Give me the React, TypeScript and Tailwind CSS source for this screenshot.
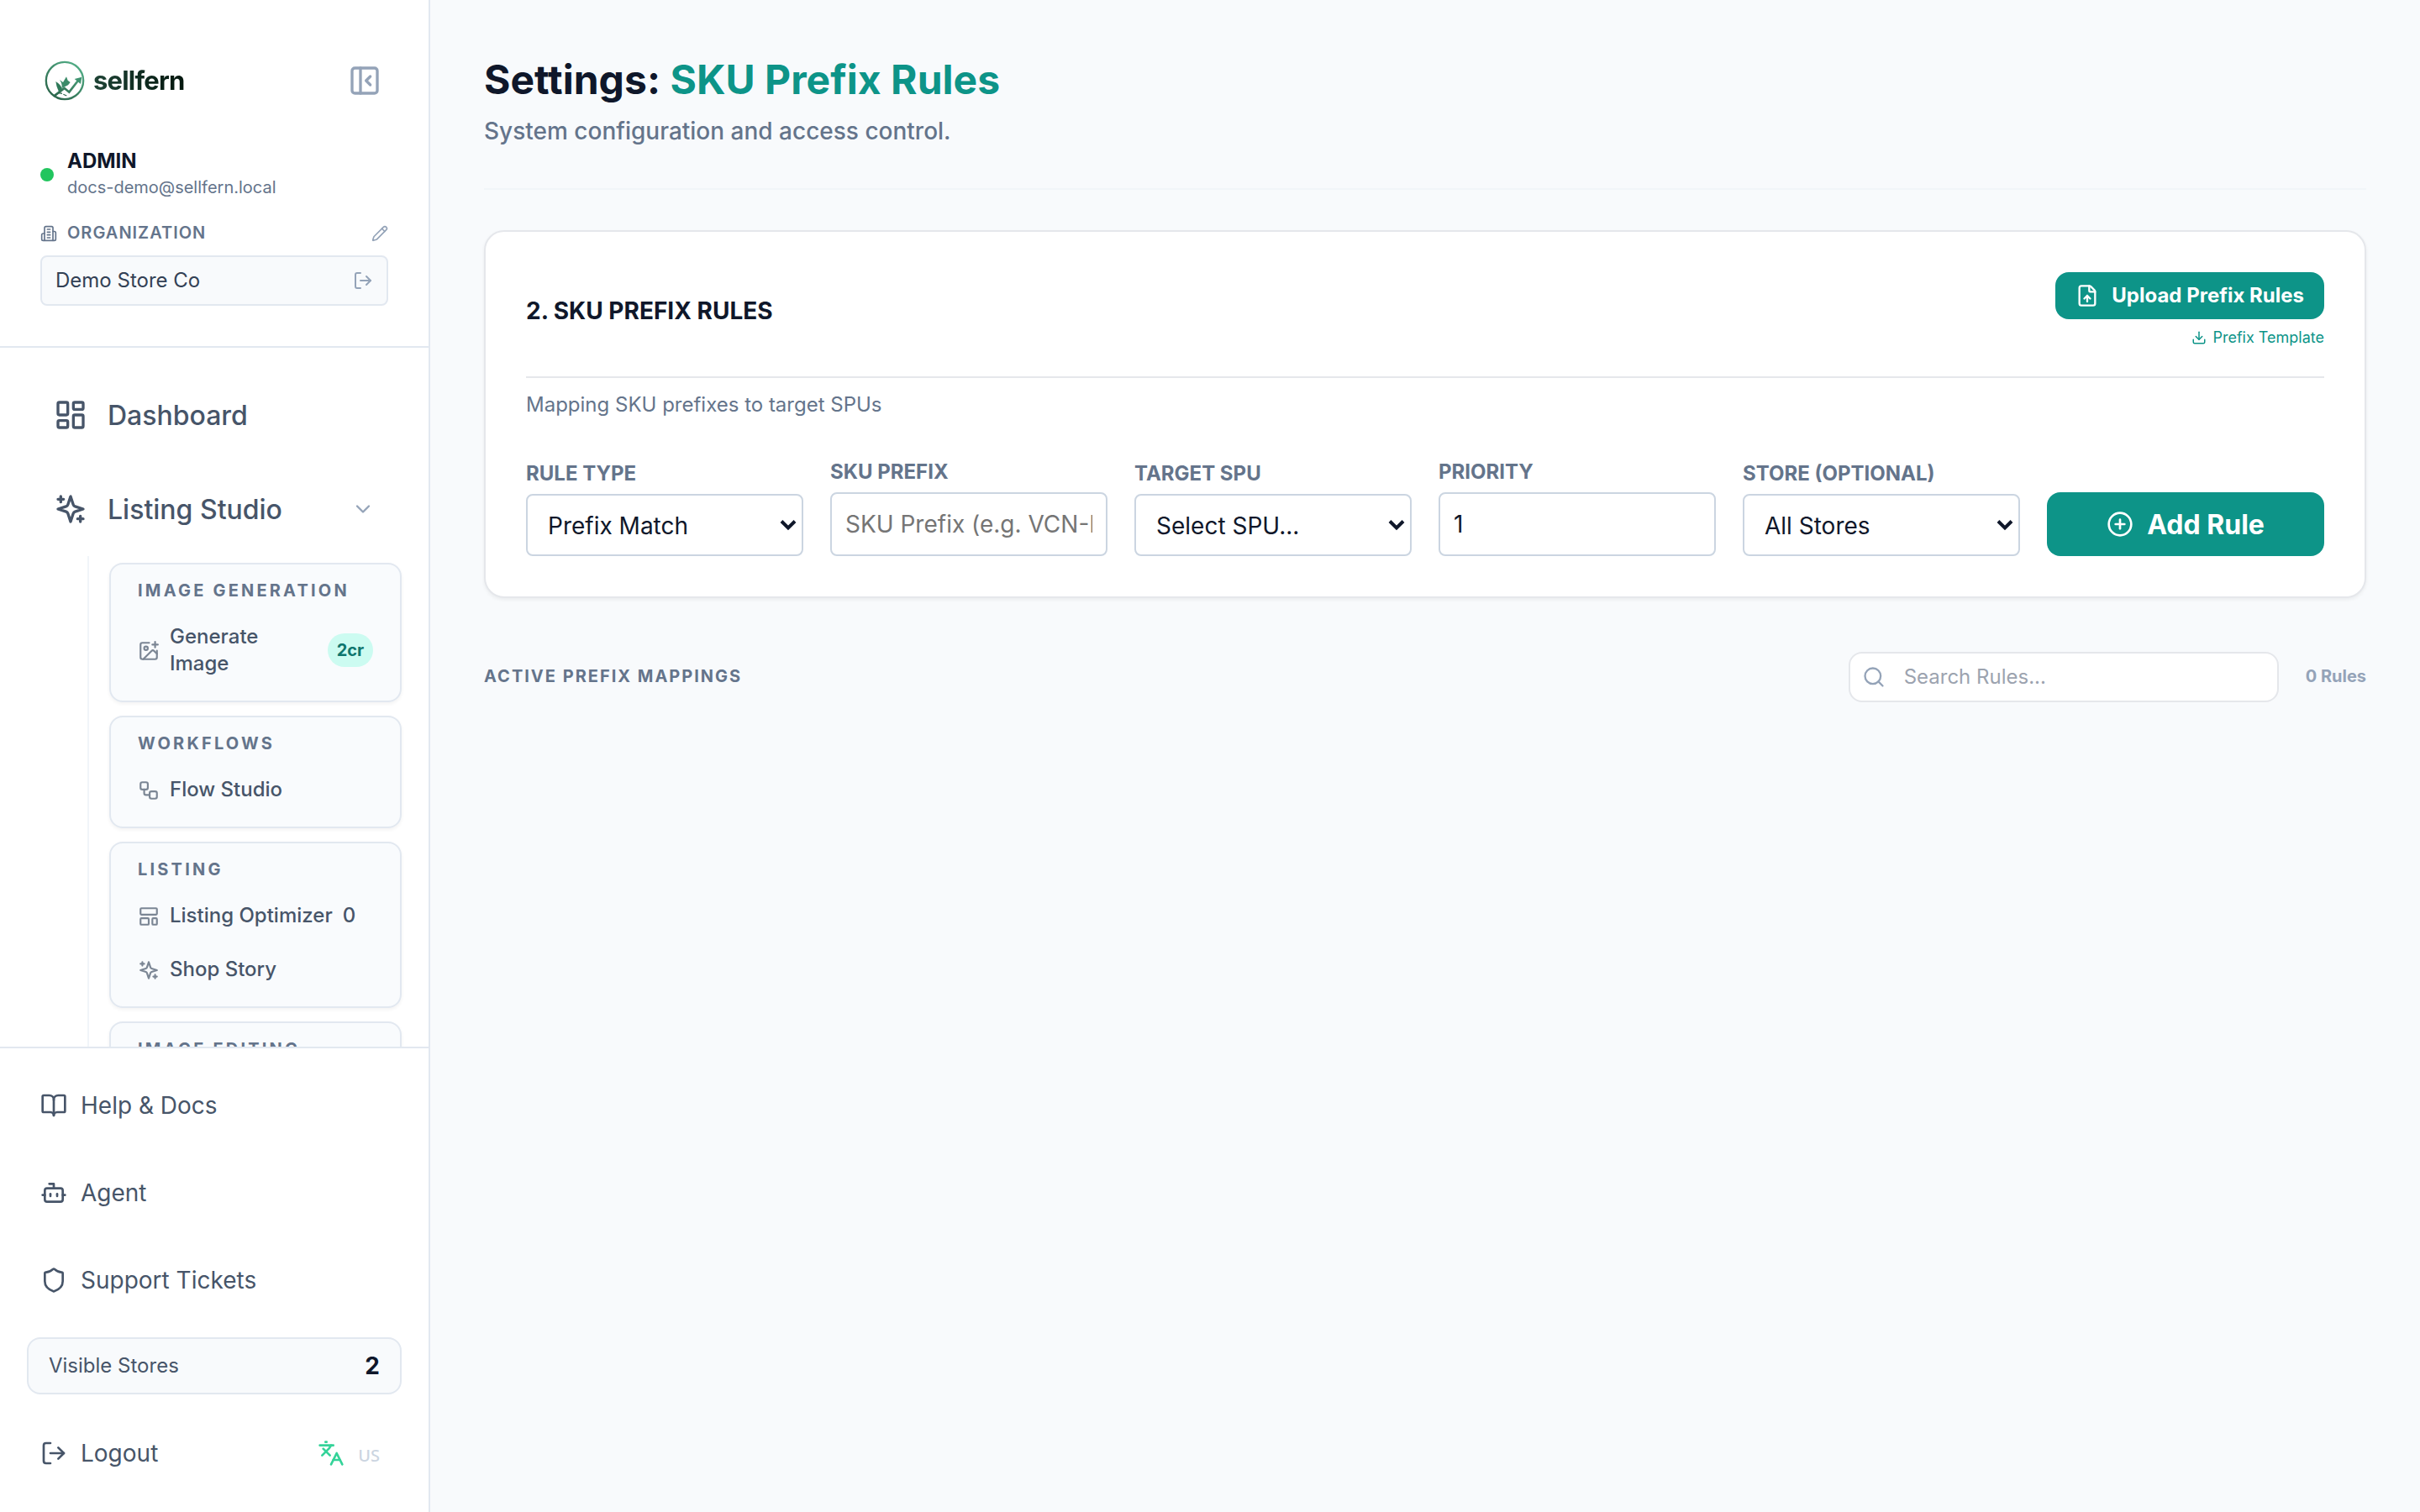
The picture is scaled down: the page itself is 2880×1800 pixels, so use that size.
import React from "react";
import {
  BookOpen,
  Bot,
  ChevronDown,
  CirclePlus,
  Download,
  FileUp,
  ImagePlus,
  Languages,
  LayoutDashboard,
  LayoutTemplate,
  LogOut,
  PanelLeftClose,
  Pencil,
  Search,
  Shield,
  Workflow,
} from "lucide-react";

type IconProps = { className?: string; strokeWidth?: number };
type IconType = React.ComponentType<IconProps>;

function LogoMark() {
  return (
    <svg viewBox="0 0 180 180" className="size-15 shrink-0" fill="none">
      <defs>
        <linearGradient id="ring" x1="40" y1="150" x2="130" y2="30" gradientUnits="userSpaceOnUse">
          <stop offset="0" stopColor="#2a6349" />
          <stop offset="1" stopColor="#52ad86" />
        </linearGradient>
      </defs>
      <circle cx="87" cy="90" r="66.5" stroke="url(#ring)" strokeWidth="7" />
      <path d="M48 146 L86 117 L103 131 L137 87" stroke="url(#ring)" strokeWidth="8" />
      <path d="M148 77 L122 84 L144 102 Z" fill="#3f9470" />
      <path d="M55 93 Q74 104 78 121 L66 130 Q57 112 55 93 Z" fill="#2f7a59" />
      <path d="M69 87 L81 96 L93 76 L98 89 L107 96 L99 106 L84 113 L76 118 Q80 103 69 87 Z" fill="#3b8b69" />
      <path d="M66 134 L78 136 M82 139 L94 144" stroke="#2a6349" strokeWidth="3.5" />
    </svg>
  );
}

function OutlineIcon({ className, strokeWidth = 2, children }: IconProps & { children: React.ReactNode }) {
  return (
    <svg
      viewBox="0 0 24 24"
      className={className}
      fill="none"
      stroke="currentColor"
      strokeWidth={strokeWidth}
      strokeLinecap="round"
      strokeLinejoin="round"
    >
      {children}
    </svg>
  );
}

function BuildingIcon(props: IconProps) {
  return (
    <OutlineIcon {...props}>
      <path d="M6 22V4a2 2 0 0 1 2-2h8a2 2 0 0 1 2 2v18Z" />
      <path d="M6 12H4a2 2 0 0 0-2 2v6a2 2 0 0 0 2 2h2" />
      <path d="M18 9h2a2 2 0 0 1 2 2v9a2 2 0 0 1-2 2h-2" />
      <path d="M10 6h4M10 10h4M10 14h4M10 18h4" />
    </OutlineIcon>
  );
}

function SparklesIcon(props: IconProps) {
  return (
    <OutlineIcon {...props}>
      <path d="m12 3-1.912 5.813a2 2 0 0 1-1.275 1.275L3 12l5.813 1.912a2 2 0 0 1 1.275 1.275L12 21l1.912-5.813a2 2 0 0 1 1.275-1.275L21 12l-5.813-1.912a2 2 0 0 1-1.275-1.275L12 3Z" />
      <path d="M5 3v4M19 17v4M3 5h4M17 19h4" />
    </OutlineIcon>
  );
}

type SubItem = { icon: IconType; label: string; badge?: string; count?: string };

const groups: { title: string; items: SubItem[] }[] = [
  { title: "IMAGE GENERATION", items: [{ icon: ImagePlus, label: "Generate Image", badge: "2cr" }] },
  { title: "WORKFLOWS", items: [{ icon: Workflow, label: "Flow Studio" }] },
  {
    title: "LISTING",
    items: [
      { icon: LayoutTemplate, label: "Listing Optimizer", count: "0" },
      { icon: SparklesIcon, label: "Shop Story" },
    ],
  },
  { title: "IMAGE EDITING", items: [] },
];

function GroupCard({ title, items }: { title: string; items: SubItem[] }) {
  return (
    <div className="shrink-0 rounded-2xl border-2 border-[#e2e8f0] bg-[#f8fafc]/80 p-4 shadow-[0_2px_4px_rgba(0,0,0,0.05)]">
      <div className="mb-3 px-4 text-[20px] leading-[30px] font-bold tracking-[0.16em] whitespace-nowrap text-[#64748b]">
        {title}
      </div>
      <div className="flex flex-col gap-2">
        {items.map(({ icon: Icon, label, badge, count }) => (
          <div key={label} className="flex items-center gap-3 px-4 py-3 text-[#475569]">
            <Icon className="relative top-px size-[26px] shrink-0 opacity-70" />
            <span className="text-2xl leading-8 font-medium">{label}</span>
            {count && <span className="text-2xl leading-8 font-medium">{count}</span>}
            {badge && (
              <span className="ml-auto w-14 rounded-full bg-[#ccfbf1] text-center text-[20px] leading-10 font-bold text-[#0f766e]">
                {badge}
              </span>
            )}
          </div>
        ))}
      </div>
    </div>
  );
}

function FooterItem({ icon: Icon, label }: { icon: IconType; label: string }) {
  return (
    <div className="flex h-[72px] items-center gap-4 px-4 text-[#475569]">
      <Icon className="size-8" strokeWidth={2} />
      <span className="text-[28px] leading-10">{label}</span>
    </div>
  );
}

function Sidebar() {
  return (
    <aside className="flex h-full w-[512px] shrink-0 flex-col border-r-2 border-[#e2e8f0] bg-white">
      <div className="h-[414px] shrink-0 border-b-2 border-[#e2e8f0] px-12 pt-[68px]">
        <div className="flex h-14 items-center">
          <LogoMark />
          <span className="ml-[3px] bg-linear-to-r from-[#1f4436] to-[#04170f] bg-clip-text text-[31px] leading-10 font-bold tracking-[-0.8px] text-transparent">
            sellfern
          </span>
          <PanelLeftClose className="mr-2 ml-auto size-10 text-[#94a3b8]" />
        </div>
        <div className="mt-[52px] flex items-center gap-4">
          <span className="mt-0.5 size-4 rounded-full bg-[#22c55e]" />
          <div>
            <div className="text-2xl leading-8 font-bold text-[#0f172a]">ADMIN</div>
            <div className="text-[20px] leading-[30px] text-[#64748b]">docs-demo@sellfern.local</div>
          </div>
        </div>
        <div className="mt-6 flex h-[30px] items-center text-[#64748b]">
          <BuildingIcon className="mt-0.5 size-5" />
          <span className="ml-3 text-[20px] leading-[30px] font-semibold tracking-[0.05em]">ORGANIZATION</span>
          <Pencil className="mt-0.5 ml-auto size-5 text-[#94a3b8]" />
        </div>
        <div className="mt-3 flex h-[60px] items-center justify-between rounded-lg border-2 border-[#e2e8f0] bg-[#f8fafc] px-4 text-[#334155]">
          <span className="text-2xl">Demo Store Co</span>
          <LogOut className="size-6 text-[#94a3b8]" />
        </div>
      </div>

      <nav className="min-h-0 flex-1 overflow-hidden pt-10 pr-8">
        <div className="flex h-20 items-center gap-6 pl-16 text-[#475569]">
          <LayoutDashboard className="size-10" />
          <span className="pt-0.5 text-[32px] leading-12 font-medium">Dashboard</span>
        </div>
        <div className="mt-8 flex h-20 items-center gap-6 pr-8 pl-16 text-[#475569]">
          <SparklesIcon className="size-10" />
          <span className="pt-0.5 text-[32px] leading-12 font-medium">Listing Studio</span>
          <ChevronDown className="ml-auto size-7 text-[#94a3b8]" />
        </div>
        <div className="mt-4 ml-[104px] flex flex-col gap-4 border-l-2 border-[#f1f5f9] pt-2 pl-6">
          {groups.map((g) => (
            <GroupCard key={g.title} title={g.title} items={g.items} />
          ))}
        </div>
      </nav>

      <div className="h-[554px] shrink-0 border-t-2 border-[#e2e8f0] bg-white px-8 pt-8">
        <div className="flex flex-col gap-8">
          <FooterItem icon={BookOpen} label="Help & Docs" />
          <FooterItem icon={Bot} label="Agent" />
          <FooterItem icon={Shield} label="Support Tickets" />
        </div>
        <div className="mt-8 flex h-[68px] items-center justify-between rounded-2xl border-2 border-[#e2e8f0] bg-[#f8fafc] px-6">
          <span className="text-2xl text-[#475569]">Visible Stores</span>
          <span className="text-[28px] leading-10 font-bold text-[#0f172a]">2</span>
        </div>
        <div className="mt-[34px] flex items-center justify-between pr-[26px]">
          <FooterItem icon={LogOut} label="Logout" />
          <div className="flex items-center gap-4">
            <Languages className="size-8 text-[#34d399]" />
            <span className="pt-1.5 font-['Noto_Sans',sans-serif] text-[20px] leading-7 font-medium text-[#cbd5e1]">
              US
            </span>
          </div>
        </div>
      </div>
    </aside>
  );
}

function Field({ label, children }: { label: string; children: React.ReactNode }) {
  return (
    <label className="flex min-w-0 flex-col gap-[7px]">
      <span className="text-2xl leading-[34px] font-bold text-[#64748b]">{label}</span>
      {children}
    </label>
  );
}

function SelectBox({ value }: { value: string }) {
  return (
    <div className="relative">
      <select className="block h-[74px] w-full appearance-none rounded-lg border-2 border-[#cbd5e1] bg-white px-6 pt-0.5 text-[28px] text-[#0f172a]">
        <option>{value}</option>
      </select>
      <svg
        viewBox="0 0 20 14"
        className="pointer-events-none absolute top-[30px] right-2 h-3.5 w-5 text-[#0f172a]"
        fill="none"
        stroke="currentColor"
        strokeWidth="4"
      >
        <path d="M2 2.5 L10 10.5 L18 2.5" />
      </svg>
    </div>
  );
}

const inputClass =
  "block h-[76px] w-full rounded-lg border-2 border-[#cbd5e1] bg-white px-4 text-[28px] text-[#0f172a] placeholder:text-[#757575]";

export default function App() {
  return (
    <div className="flex h-[1800px] w-[2880px] overflow-hidden bg-[#f8fafc] font-['Inter',sans-serif]">
      <Sidebar />
      <main className="flex-1 px-16 pt-[65px]">
        <header className="h-[161px] border-b-2 border-[#f1f5f9]">
          <h1 className="text-5xl leading-[60px] font-bold tracking-[0.04px] text-[#0f172a]">
            Settings: <span className="text-[#0d9488]">SKU Prefix Rules</span>
          </h1>
          <p className="mt-[11px] text-[28px] leading-10 font-medium text-[#64748b]">
            System configuration and access control.
          </p>
        </header>

        <section className="mt-12 rounded-3xl border-2 border-[#e5e7eb] bg-white p-12 shadow-[0_2px_4px_rgba(0,0,0,0.06)]">
          <div className="flex items-center justify-between border-b-2 border-[#e5e7eb] pb-[33px]">
            <h2 className="text-[28px] leading-10 font-bold text-[#0f172a]">2. SKU PREFIX RULES</h2>
            <div className="flex flex-col items-end gap-2">
              <button className="flex h-14 w-80 items-center justify-end gap-[15px] rounded-2xl bg-[#0d9488] pr-6 text-2xl font-bold whitespace-nowrap text-white">
                <FileUp className="size-7 shrink-0" />
                Upload Prefix Rules
              </button>
              <a className="flex items-center gap-[7px] text-[18px] leading-[27px] text-[#0d9488]">
                <Download className="size-[18px]" />
                Prefix Template
              </a>
            </div>
          </div>
          <p className="mt-4 text-2xl leading-8 text-[#64748b]">Mapping SKU prefixes to target SPUs</p>

          <div className="mt-[47px] grid grid-cols-6 items-end gap-8">
            <Field label="RULE TYPE">
              <SelectBox value="Prefix Match" />
            </Field>
            <Field label="SKU PREFIX">
              <input className={inputClass} placeholder="SKU Prefix (e.g. VCN-DRESS)" />
            </Field>
            <Field label="TARGET SPU">
              <SelectBox value="Select SPU..." />
            </Field>
            <Field label="PRIORITY">
              <input className={inputClass} defaultValue="1" />
            </Field>
            <Field label="STORE (OPTIONAL)">
              <SelectBox value="All Stores" />
            </Field>
            <button className="flex h-[76px] items-center justify-center gap-4 rounded-2xl bg-[#0d9488] text-[32px] font-bold text-white">
              <CirclePlus className="size-8" />
              <span className="pt-0.5 leading-12">Add Rule</span>
            </button>
          </div>
        </section>

        <div className="mt-16 flex items-center">
          <h3 className="pb-0.5 text-[20px] leading-7 font-bold tracking-[0.1em] text-[#64748b]">
            ACTIVE PREFIX MAPPINGS
          </h3>
          <div className="ml-auto flex h-[60px] w-[512px] items-center gap-[22px] rounded-2xl border-2 border-[#e5e7eb] bg-white px-3.5">
            <Search className="size-7 shrink-0 text-[#94a3b8]" />
            <input
              className="min-w-0 flex-1 text-2xl text-[#0f172a] placeholder:text-[#9ca3af]"
              placeholder="Search Rules..."
            />
          </div>
          <span className="ml-8 pb-0.5 text-[20px] leading-7 font-bold whitespace-nowrap text-[#94a3b8]">0 Rules</span>
        </div>
      </main>
    </div>
  );
}
